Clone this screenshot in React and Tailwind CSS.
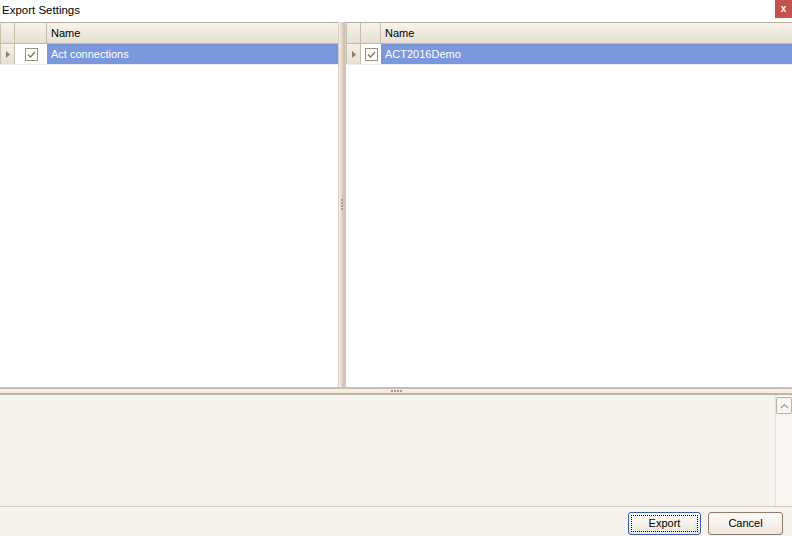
import React from "react";

const Check = () => (
  <div className="w-[13px] h-[13px] border border-[#9c8f80] bg-white flex items-center justify-center">
    <svg width="9" height="9" viewBox="0 0 9 9" fill="none">
      <path d="M1 4.5 L3.5 7 L8 2" stroke="#7d7468" strokeWidth="1.3" />
    </svg>
  </div>
);

const Grid = ({ label, checkW }) => (
  <div className="flex-1 flex flex-col bg-white border-t border-[#b9ad9e] min-w-0">
    <div className="flex h-[21px] bg-gradient-to-b from-[#f6f3ec] to-[#e6dfd1] border-b border-[#c5b9a8]">
      <div className="w-[15px] shrink-0 border-r border-[#c9bdac] rounded-tl-[4px] border-l border-[#c9bdac]" />
      <div className={`${checkW} shrink-0 border-r border-[#c9bdac]`} />
      <div className="flex-1 flex items-center pl-[4px] text-[#000] rounded-tr-[4px]">Name</div>
    </div>
    <div className="flex h-[21px] border-b border-[#f0ede6]">
      <div className="w-[15px] shrink-0 bg-gradient-to-b from-[#f3efe7] to-[#e6dfd1] border-r border-l border-[#c9bdac] flex items-center justify-center">
        <svg width="4" height="7" viewBox="0 0 4 7">
          <path d="M0 0 L4 3.5 L0 7 Z" fill="#8b7d6d" />
        </svg>
      </div>
      <div className={`${checkW} shrink-0 flex items-center justify-center`}>
        <Check />
      </div>
      <div className="flex-1 bg-[#7b98dc] text-white flex items-center pl-[4px]">{label}</div>
    </div>
    <div className="flex-1" />
  </div>
);

const Dots = () => (
  <>
    <div className="w-[2px] h-[2px] bg-[#a89c8c]" />
    <div className="w-[2px] h-[2px] bg-[#a89c8c]" />
    <div className="w-[2px] h-[2px] bg-[#a89c8c]" />
    <div className="w-[2px] h-[2px] bg-[#a89c8c]" />
  </>
);

export default function App() {
  return (
    <div className="w-[792px] h-[536px] bg-[#f5f3ee] flex flex-col font-['Liberation_Sans',sans-serif] text-[11px] text-black overflow-hidden">
      <div className="h-[22px] bg-white flex justify-between">
        <div className="pl-[2px] pt-[2px] text-[11.5px]">Export Settings</div>
        <div className="w-[17px] h-[18px] bg-[#c75050] text-white flex items-center justify-center text-[10px] font-bold leading-none">x</div>
      </div>
      <div className="h-[365px] flex">
        <Grid label="Act connections" checkW="w-[32px]" />
        <div className="w-[8px] flex flex-col items-center justify-center gap-[1px] bg-gradient-to-r from-[#f6f2ea] via-[#ddd4c6] to-[#c9bcaa] border-x border-[#d6cbbd]">
          <Dots />
        </div>
        <div className="w-[446px] flex">
          <Grid label="ACT2016Demo" checkW="w-[20px]" />
        </div>
      </div>
      <div className="h-[8px] flex items-center justify-center gap-[1px] bg-[#f3eee4] border-y-2 border-t-[#c7bcaf] border-b-[#c0b3a3]">
        <Dots />
      </div>
      <div className="h-[111px] flex">
        <div className="flex-1" />
        <div className="w-[17px] pt-[2px] border-l border-[#e6e1d8] bg-[#f8f6f2] flex flex-col">
          <div className="w-[16px] h-[17px] border border-[#bcb3a6] rounded-[2px] bg-[#f7f5f1] flex items-center justify-center">
            <svg width="9" height="6" viewBox="0 0 9 6" fill="none">
              <path d="M1 5 L4.5 1.5 L8 5" stroke="#a39a8e" strokeWidth="1.2" />
            </svg>
          </div>
        </div>
      </div>
      <div className="flex-1 border-t border-[#d9cfc1] flex justify-end items-start pt-[5px] pr-[9px] gap-[7px]">
        <button className="w-[73px] h-[23px] rounded-[3px] border border-[#3a5fa8] bg-gradient-to-b from-[#fdfcfa] to-[#ebe6dc] flex items-center justify-center p-[2px]">
          <span className="w-full h-full border border-dotted border-black flex items-center justify-center">Export</span>
        </button>
        <button className="w-[75px] h-[23px] rounded-[3px] border border-[#8e7b6a] bg-gradient-to-b from-[#fdfcfa] to-[#ebe6dc] flex items-center justify-center">
          Cancel
        </button>
      </div>
    </div>
  );
}
